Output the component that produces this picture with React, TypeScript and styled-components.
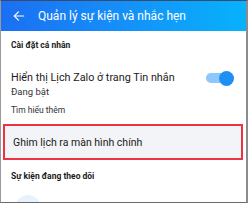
import React from "react";
import styled, { createGlobalStyle } from "styled-components";

const Global = createGlobalStyle`
  html, body { margin: 0; padding: 0; background: #ffffff; }
  body { font-family: Roboto, "Noto Sans", "Liberation Sans", sans-serif; }
`;

const Frame = styled.div`
  width: 248px;
  height: 203px;
  box-sizing: border-box;
  overflow: hidden;
  border-left: 1px solid #9a9a9a;
  border-right: 2px solid #8c8c8c;
  border-top: 1px solid #3a4a6a;
  border-bottom: 1px solid #6a6a6a;
  background: #ffffff;
  display: flex;
  flex-direction: column;
`;

const Header = styled.div`
  height: 30px;
  flex: none;
  display: flex;
  align-items: center;
  gap: 12px;
  padding-left: 11px;
  background: linear-gradient(90deg, #1b6ff3 0%, #1590f8 50%, #07b2fc 100%);
  color: #ffffff;
`;

const Title = styled.div`
  font-size: 12px;
  font-weight: 400;
  white-space: nowrap;
`;

const Section = styled.div<{ $top: number }>`
  margin-top: ${(p) => p.$top}px;
  padding-left: 10px;
  font-size: 8.5px;
  line-height: 11px;
  font-weight: 700;
  color: #1b1b1b;
  white-space: nowrap;
`;

const SettingRow = styled.div`
  display: flex;
  align-items: flex-start;
  justify-content: space-between;
  margin-top: 20px;
  padding: 0 15px 0 10px;
`;

const RowTexts = styled.div`
  display: flex;
  flex-direction: column;
`;

const RowTitle = styled.div`
  font-size: 10.8px;
  color: #1a1a1a;
  line-height: 14px;
  white-space: nowrap;
`;

const RowSub = styled.div`
  font-size: 9.5px;
  color: #333333;
  line-height: 12px;
  margin-top: 1px;
`;

const Learn = styled.div`
  margin-top: 7px;
  padding-left: 10px;
  font-size: 8.5px;
  color: #333333;
  line-height: 10px;
`;

const Switch = styled.div`
  position: relative;
  width: 25px;
  height: 10px;
  border-radius: 5px;
  background: #8cc8fb;
  margin-top: 2px;
`;

const Thumb = styled.div`
  position: absolute;
  right: -3px;
  top: -2.5px;
  width: 15px;
  height: 15px;
  border-radius: 50%;
  background: #1e90f4;
`;

const Highlight = styled.div`
  margin: 9px 3px 0 2px;
  height: 36px;
  flex: none;
  box-sizing: border-box;
  border: 2px solid #ee3340;
  background: #f2f4f7;
  display: flex;
  align-items: center;
  padding-left: 8px;
  font-size: 10.5px;
  color: #1a1a1a;
  white-space: nowrap;
`;

const Avatar = styled.div`
  margin: 13px 0 0 14px;
  width: 26px;
  height: 26px;
  flex: none;
  border-radius: 50%;
  background: #e8f2fc;
`;

const Back = () => (
  <svg width="14" height="14" viewBox="0 0 24 24" fill="none" stroke="#ffffff" strokeWidth="2" strokeLinecap="round" strokeLinejoin="round">
    <path d="M20 12H4" />
    <path d="M11 5l-7 7 7 7" />
  </svg>
);

export default function App() {
  return (
    <>
      <Global />
      <Frame>
        <Header>
          <Back />
          <Title>Quản lý sự kiện và nhắc hẹn</Title>
        </Header>
        <Section $top={9}>Cài đặt cá nhân</Section>
        <SettingRow>
          <RowTexts>
            <RowTitle>Hiển thị Lịch Zalo ở trang Tin nhắn</RowTitle>
            <RowSub>Đang bật</RowSub>
          </RowTexts>
          <Switch>
            <Thumb />
          </Switch>
        </SettingRow>
        <Learn>Tìm hiểu thêm</Learn>
        <Highlight>Ghim lịch ra màn hình chính</Highlight>
        <Section $top={11}>Sự kiện đang theo dõi</Section>
        <Avatar />
      </Frame>
    </>
  );
}
